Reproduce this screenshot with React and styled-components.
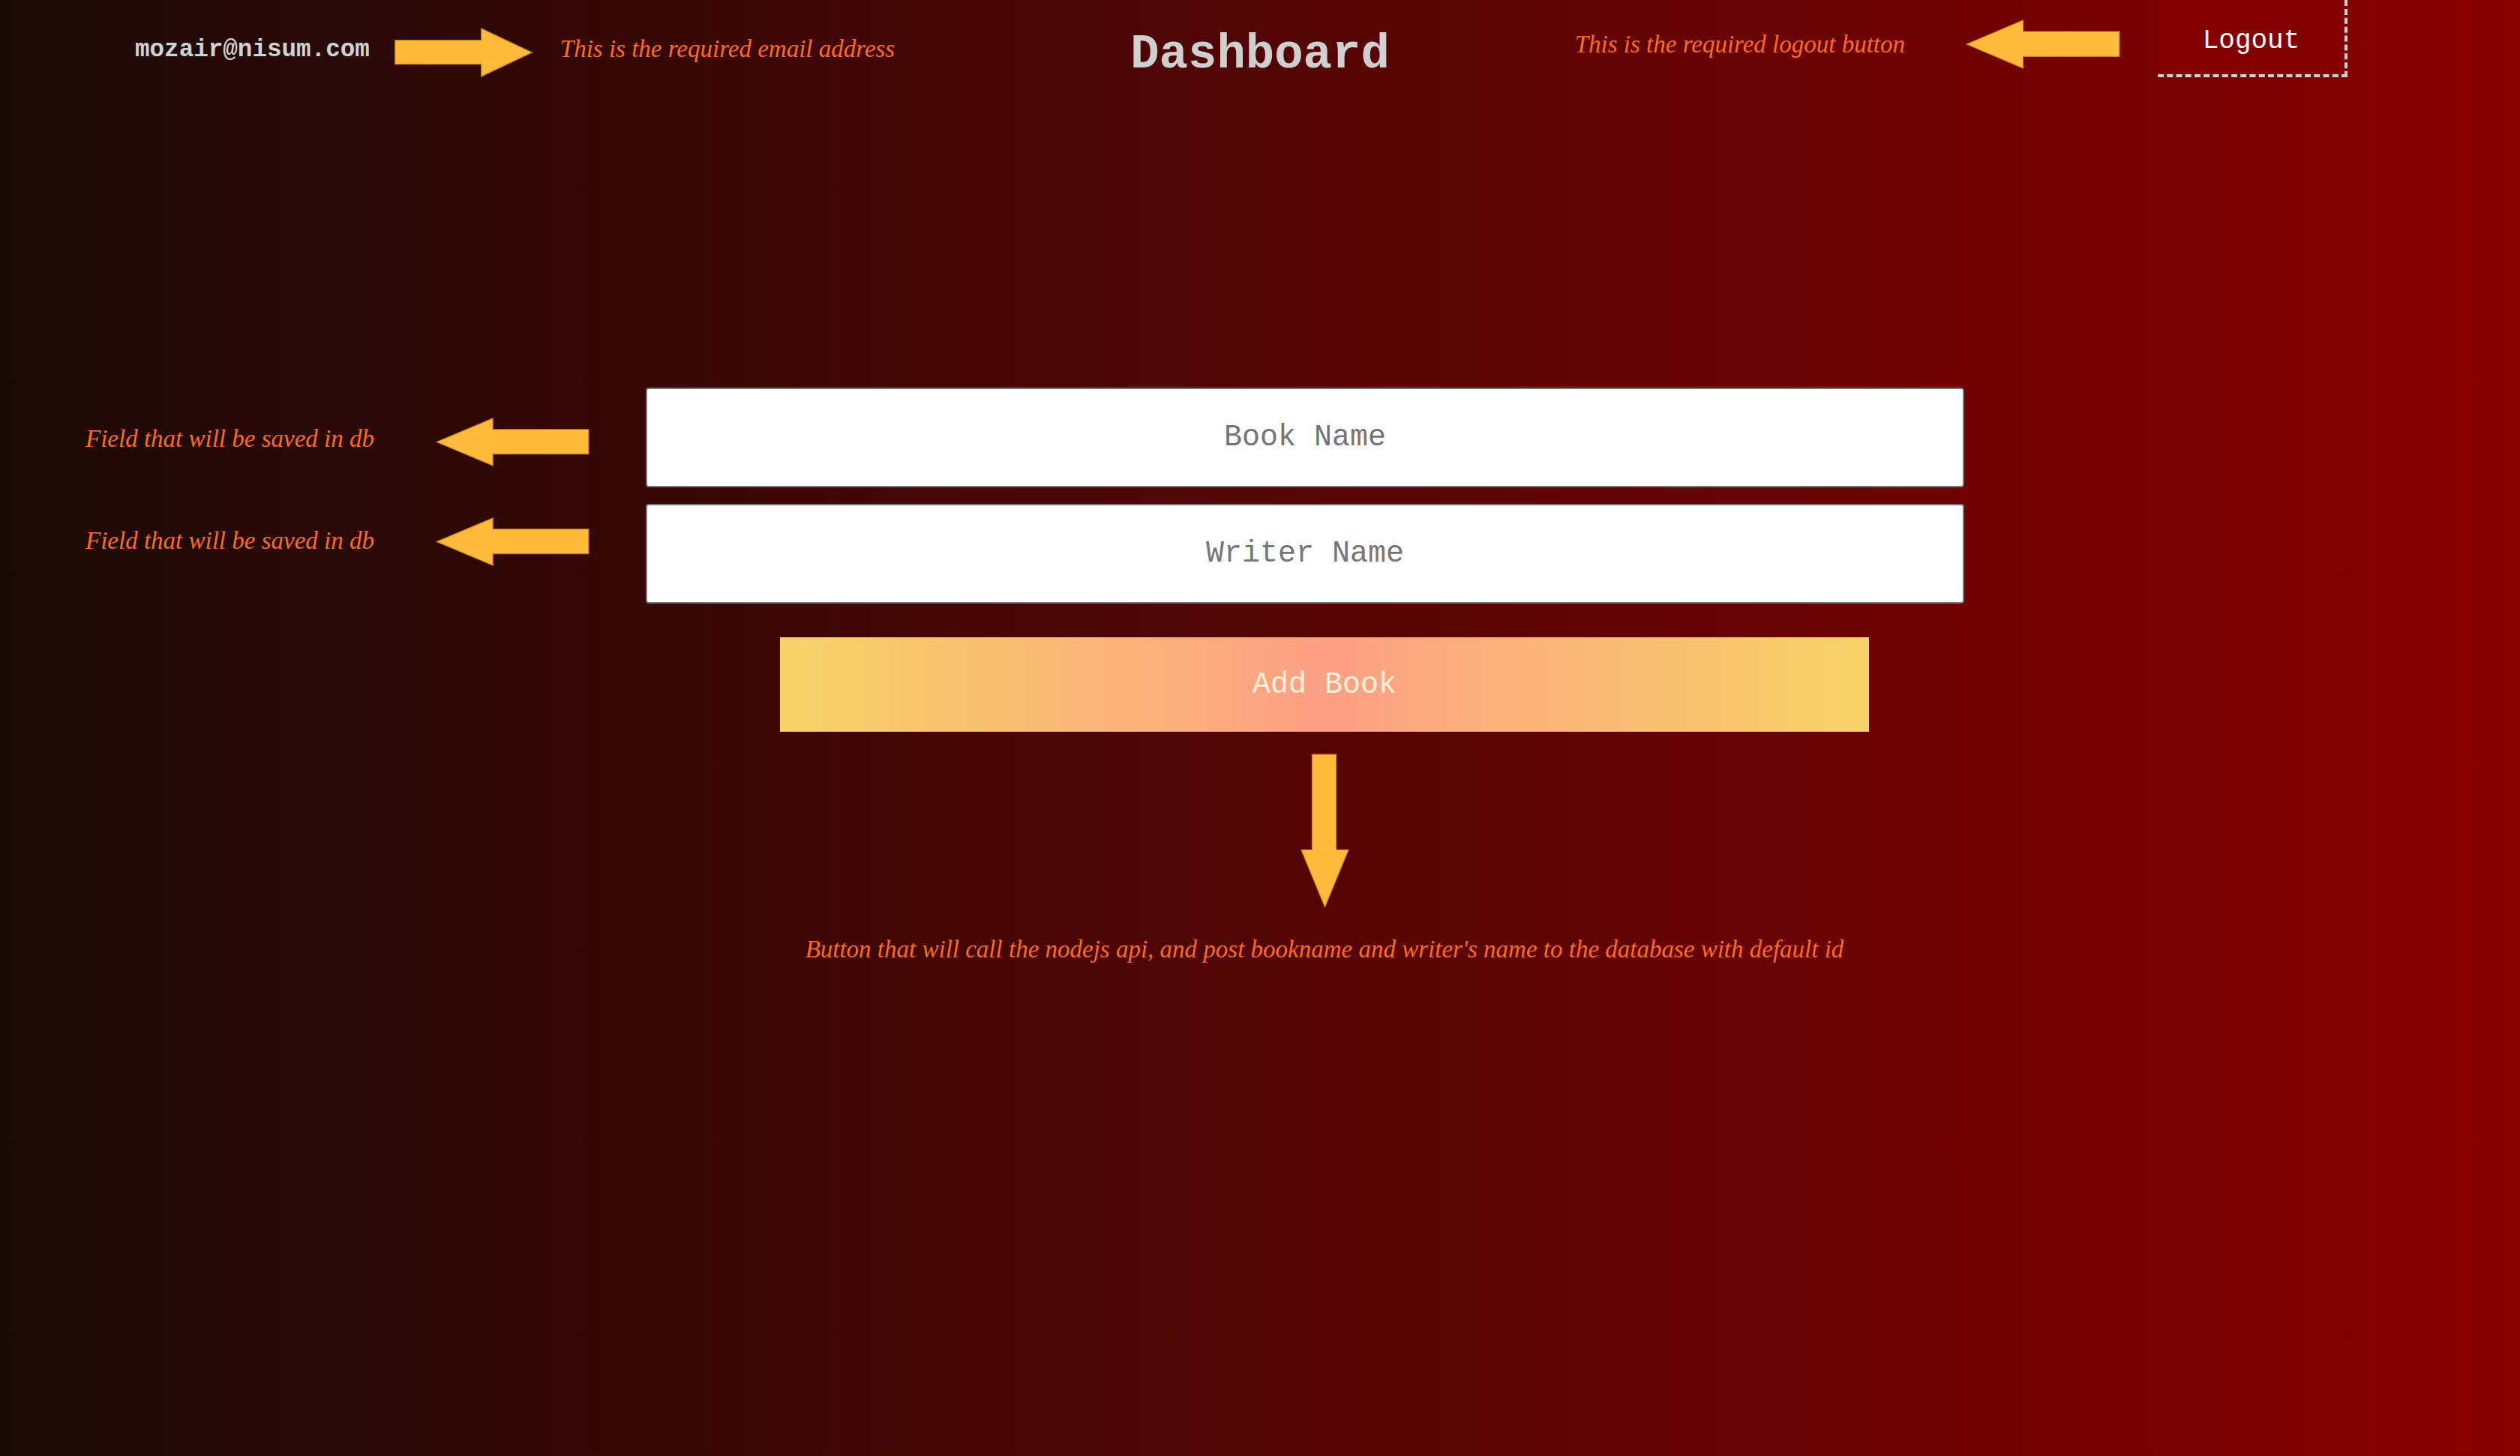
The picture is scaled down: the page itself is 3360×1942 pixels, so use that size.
import styled, { createGlobalStyle } from 'styled-components';

const mono = `"Liberation Mono", "Courier New", monospace`;
const serif = `"Liberation Serif", "Times New Roman", serif`;

const GlobalStyle = createGlobalStyle`
  html, body {
    margin: 0;
    padding: 0;
    overflow: hidden;
  }
  * {
    box-sizing: border-box;
  }
`;

function Arrow({ dir, width, height }) {
  // shaft thickness ~ half of the head height, head ~ 37% of the length
  let points;
  if (dir === 'right') {
    const hx = width * 0.63;
    const s1 = height * 0.245;
    const s2 = height * 0.745;
    points = `0,${s1} ${hx},${s1} ${hx},0 ${width},${height / 2} ${hx},${height} ${hx},${s2} 0,${s2}`;
  } else if (dir === 'left') {
    const hx = width * 0.37;
    const s1 = height * 0.235;
    const s2 = height * 0.755;
    points = `0,${height / 2} ${hx},0 ${hx},${s1} ${width},${s1} ${width},${s2} ${hx},${s2} ${hx},${height} `;
  } else {
    const hy = height * 0.625;
    const s1 = width * 0.23;
    const s2 = width * 0.74;
    points = `${s1},0 ${s2},0 ${s2},${hy} ${width},${hy} ${width / 2},${height} 0,${hy} ${s1},${hy}`;
  }
  return (
    <ArrowSvg width={width} height={height} viewBox={`-1 -1 ${width + 2} ${height + 2}`}>
      <polygon points={points} fill="#ffb93b" stroke="#c5801f" strokeWidth="1.2" strokeLinejoin="miter" />
    </ArrowSvg>
  );
}

export default function App() {
  return (
    <Page>
      <GlobalStyle />
      <Header>
        <LeftGroup>
          <Email>mozair@nisum.com</Email>
          <Arrow dir="right" width={188} height={66} />
          <HeaderNote $left>This is the required email address</HeaderNote>
        </LeftGroup>
        <Title>Dashboard</Title>
        <RightGroup>
          <HeaderNote>This is the required logout button</HeaderNote>
          <ArrowSlot $top={26} $gapLeft={79}>
            <Arrow dir="left" width={210} height={66} />
          </ArrowSlot>
          <LogoutButton>Logout</LogoutButton>
        </RightGroup>
      </Header>

      <Main>
        <NotesColumn>
          <NoteRow>
            <FieldNote $lift={8}>Field that will be saved in db</FieldNote>
            <Arrow dir="left" width={209} height={65} />
          </NoteRow>
          <NoteRow>
            <FieldNote $lift={3}>Field that will be saved in db</FieldNote>
            <Arrow dir="left" width={209} height={65} />
          </NoteRow>
        </NotesColumn>

        <FormColumn>
          <TextInput type="text" placeholder="Book Name" />
          <TextInput type="text" placeholder="Writer Name" />
          <ActionBlock>
            <AddButton type="button">Add Book</AddButton>
            <DownArrowSlot>
              <Arrow dir="down" width={65} height={210} />
            </DownArrowSlot>
            <FootNote>
              Button that will call the nodejs api, and post bookname and writer's name to the database with default id
            </FootNote>
          </ActionBlock>
        </FormColumn>
      </Main>
    </Page>
  );
}

const Page = styled.div`
width: 100%;
min-height: 100vh;
background: linear-gradient(to right, #1a0a06 0%, #520505 50%, #880000 100%);
`
const Header = styled.header`
display: grid;
grid-template-columns: 1fr auto 1fr;
height: 103px;
`
const LeftGroup = styled.div`
display: flex;
align-items: center;
justify-self: start;
height: 140px;
margin-left: 180px;
gap: 31px;
`
const Email = styled.span`
font-family: ${mono};
font-weight: 700;
font-size: 32.6px;
color: #d2d2d2;
margin-bottom: 8px;
`
const HeaderNote = styled.span`
font-family: ${serif};
font-style: italic;
font-size: 33px;
color: #ff6a1c;
white-space: nowrap;
margin-left: ${p => (p.$left ? '4px' : '0')};
margin-top: ${p => (p.$left ? '0' : '41px')};
margin-bottom: ${p => (p.$left ? '10px' : '0')};
`
const Title = styled.h1`
margin: 41px 0 0;
font-family: ${mono};
font-weight: 700;
font-size: 64px;
line-height: 1;
color: #cfcfcf;
`
const RightGroup = styled.div`
display: flex;
align-items: flex-start;
justify-self: end;
margin-right: 230px;
`
const ArrowSlot = styled.div`
display: flex;
margin-top: ${p => p.$top}px;
margin-left: ${p => p.$gapLeft}px;
margin-right: 48px;
`
const ArrowSvg = styled.svg`
display: block;
flex-shrink: 0;
overflow: visible;
`
const LogoutButton = styled.button`
width: 253px;
height: 103px;
padding: 10px 0 0;
background: #830000;
border: none;
border-right: 4px dashed #d0d0d0;
border-bottom: 4px dashed #d0d0d0;
font-family: ${mono};
font-size: 36px;
color: #ffffff;
cursor: pointer;
`
const Main = styled.main`
display: grid;
grid-template-columns: 674px 1758px;
column-gap: 73px;
padding-left: 114px;
margin-top: 414px;
`
const NotesColumn = styled.div`
display: flex;
flex-direction: column;
gap: 68px;
padding-top: 40px;
`
const NoteRow = styled.div`
display: flex;
align-items: center;
justify-content: space-between;
height: 65px;
`
const FieldNote = styled.span`
font-family: ${serif};
font-style: italic;
font-size: 33px;
color: #ff6a1c;
white-space: nowrap;
margin-bottom: ${p => p.$lift}px;
`
const FormColumn = styled.div`
display: flex;
flex-direction: column;
gap: 22px;
`
const TextInput = styled.input`
width: 100%;
height: 133px;
border: 2px solid #767676;
border-radius: 4px;
background: #ffffff;
font-family: ${mono};
font-size: 40px;
text-align: center;
color: #222;
outline: none;
&::placeholder {
  color: #757575;
}
`
const ActionBlock = styled.div`
display: flex;
flex-direction: column;
align-items: center;
width: 1452px;
margin-left: 179px;
margin-top: 23px;
`
const AddButton = styled.button`
width: 100%;
height: 126px;
border: none;
background: linear-gradient(to right, #f6d365 0%, #fda085 50%, #f6d365 100%);
font-family: ${mono};
font-size: 40px;
color: #fff2dc;
cursor: pointer;
`
const DownArrowSlot = styled.div`
display: flex;
margin-top: 27px;
`
const FootNote = styled.p`
margin: 35px 0 0;
font-family: ${serif};
font-style: italic;
font-size: 33px;
color: #ff6a1c;
white-space: nowrap;
`
